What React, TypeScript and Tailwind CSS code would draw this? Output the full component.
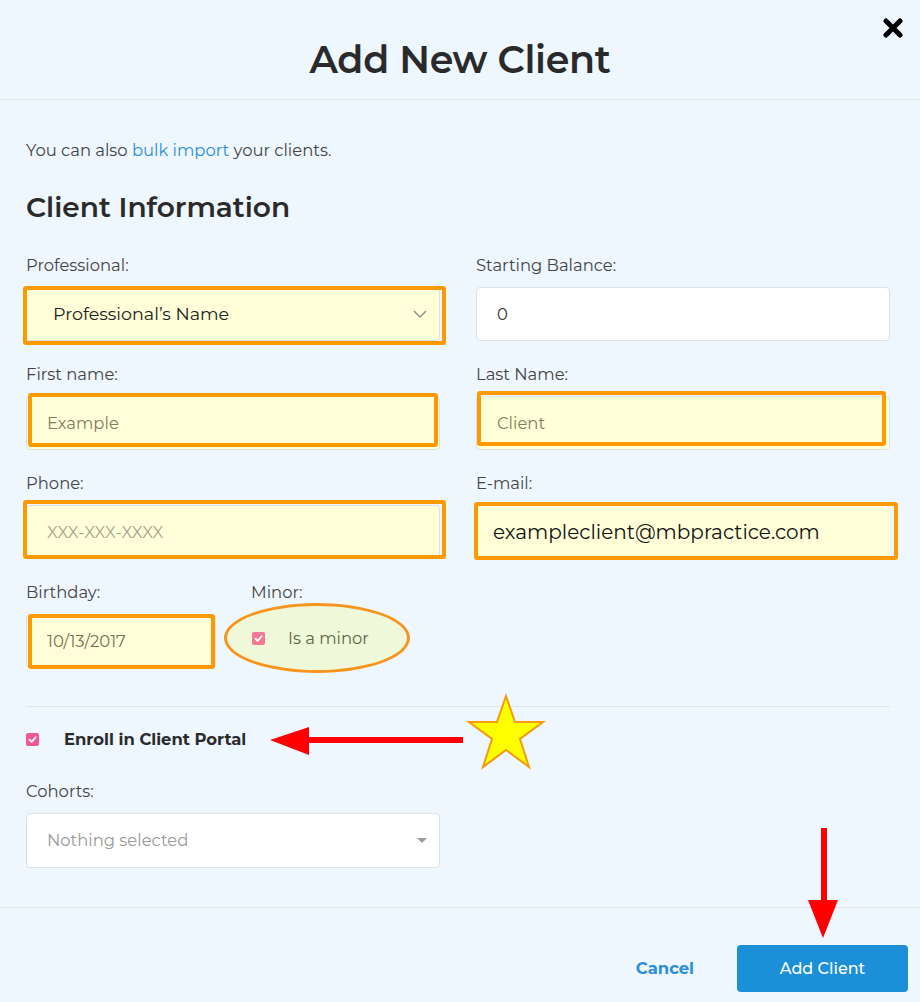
import React from "react";

const font = { fontFamily: "Montserrat, 'DejaVu Sans', sans-serif" };

function Label({ children }: { children: React.ReactNode }) {
    return <div className="text-[16.4px] leading-5 text-[#444] mb-3">{children}</div>;
}

function Box({ className = "", hl = "", children }: { className?: string; hl?: string; children?: React.ReactNode }) {
    return (
        <div className={`relative h-[54px] rounded border border-[#dde1e5] flex items-center ${className}`}>
            {children}
            {hl && <span className={`absolute border-4 border-[#ff9900] rounded-[3px] pointer-events-none ${hl}`} />}
        </div>
    );
}

function Check({ light = false }: { light?: boolean }) {
    return (
        <span className={`w-[13px] h-[13px] rounded-[2px] flex items-center justify-center ${light ? "bg-[#f27a95]" : "bg-[#f0569a]"}`}>
            <svg width="9" height="9" viewBox="0 0 10 10" fill="none">
                <path d="M1.5 5.2 L4 7.6 L8.6 2.4" stroke="white" strokeWidth="1.8" strokeLinecap="round" strokeLinejoin="round" />
            </svg>
        </span>
    );
}

export default function App() {
    return (
        <div className="relative w-[920px] h-[1002px] bg-[#eef6fe] text-[#333] overflow-hidden" style={font}>
            {/* Header */}
            <div className="relative h-[100px] pt-5 flex items-center justify-center border-b border-[#dfe6ee]">
                <h1 className="text-[38px] font-semibold text-[#2a2a2a] tracking-[-0.3px]">Add New Client</h1>
                <svg className="absolute top-[18px] right-[17px]" width="20" height="20" viewBox="0 0 20 20">
                    <path d="M3 3 L17 17 M17 3 L3 17" stroke="#000" strokeWidth="5" strokeLinecap="round" />
                </svg>
            </div>

            {/* Body */}
            <div className="pl-[26px] pr-[30px] pt-[39px]">
                <p className="text-[16.4px] leading-[22px] text-[#444]">
                    You can also <span className="text-[#2a8fd8]">bulk import</span> your clients.
                </p>
                <h2 className="mt-[29px] text-[28px] leading-[34px] font-semibold text-[#2a2a2a]">Client Information</h2>

                <div className="mt-[31px] grid grid-cols-2 gap-x-9 gap-y-[23px]">
                    <div>
                        <Label>Professional:</Label>
                        <Box className="bg-[#ffffd8] pl-[26px] pr-3 justify-between" hl="-left-[4px] -right-[7px] -top-[2px] -bottom-[5px]">
                            <span className="text-[17.5px] text-[#222]">Professional’s Name</span>
                            <svg width="14" height="8" viewBox="0 0 14 8" fill="none">
                                <path d="M1 1 L7 7 L13 1" stroke="#888" strokeWidth="1.3" />
                            </svg>
                        </Box>
                    </div>
                    <div>
                        <Label>Starting Balance:</Label>
                        <Box className="bg-white pl-5">
                            <span className="text-[16.4px] text-[#333]">0</span>
                        </Box>
                    </div>

                    <div>
                        <Label>First name:</Label>
                        <Box className="bg-[#ffffd8] pl-5" hl="left-[1px] right-[1px] -top-[4px] bottom-[2px]">
                            <span className="text-[16.4px] text-[#7a7f5e]">Example</span>
                        </Box>
                    </div>
                    <div>
                        <Label>Last Name:</Label>
                        <Box className="bg-[#ffffd8] pl-5" hl="left-0 right-[3px] -top-[6px] bottom-[3px]">
                            <span className="text-[16.4px] text-[#7a7f5e]">Client</span>
                        </Box>
                    </div>

                    <div>
                        <Label>Phone:</Label>
                        <Box className="bg-[#ffffd8] pl-5" hl="-left-[4px] -right-[7px] -top-[6px] -bottom-[1px]">
                            <span className="text-[16.4px] text-[#a3a68a]">XXX-XXX-XXXX</span>
                        </Box>
                    </div>
                    <div>
                        <Label>E-mail:</Label>
                        <Box className="bg-[#ffffd8] pl-4 border-[#ffffd8]" hl="-left-[3px] -right-[9px] -top-[4px] -bottom-[2px]">
                            <span className="text-[20px] text-[#111]">exampleclient@mbpractice.com</span>
                        </Box>
                    </div>

                    <div className="flex gap-[35px]">
                        <div className="w-[190px]">
                            <Label>Birthday:</Label>
                            <Box className="bg-[#ffffd8] pl-5" hl="left-[1px] right-0 -top-[1px] -bottom-[2px]">
                                <span className="text-[16.4px] text-[#6f7355]">10/13/2017</span>
                            </Box>
                        </div>
                        <div>
                            <Label>Minor:</Label>
                            <div className="-ml-[27px] -mt-[11px] w-[186px] h-[70px] rounded-[50%] border-[3px] border-[#f7941d] bg-[#eff8d8] flex items-center pl-[25px] gap-[23px]">
                                <Check light />
                                <span className="text-[16.4px] text-[#5f6347]">Is a minor</span>
                            </div>
                        </div>
                    </div>
                </div>

                <div className="mt-[33px] border-t border-[#dfe6ee]" />

                <div className="mt-5 h-6 flex items-center gap-[25px]">
                    <Check />
                    <span className="text-[16.4px] font-bold text-[#2a2a2a]">Enroll in Client Portal</span>
                </div>

                <div className="mt-[30px] w-[414px]">
                    <Label>Cohorts:</Label>
                    <Box className="bg-white pl-5 pr-3 justify-between h-[55px]">
                        <span className="text-[16.4px] text-[#999]">Nothing selected</span>
                        <svg width="10" height="6" viewBox="0 0 10 6">
                            <path d="M0 0 L10 0 L5 5 Z" fill="#999" />
                        </svg>
                    </Box>
                </div>
            </div>

            {/* Footer */}
            <div className="absolute left-0 right-0 top-[907px] border-t border-[#dfe6ee] pt-[37px] pr-3 flex justify-end items-center gap-[43px]">
                <span className="text-[16.4px] font-bold text-[#2a8fd8]">Cancel</span>
                <button className="w-[171px] h-[47px] rounded bg-[#1b90d8] text-white text-[16px] font-medium">Add Client</button>
            </div>

            {/* Annotations */}
            <svg className="absolute inset-0 pointer-events-none" width="920" height="1002">
                <rect x="288" y="737" width="175" height="6" fill="#ff0000" />
                <polygon points="270,740 309,727 309,755" fill="#ff0000" />
                <polygon
                    points="506,696 515,722 543,722 520,739 529,767 506,750 483,767 492,739 469,722 497,722"
                    fill="#ffff00"
                    stroke="#f59a0c"
                    strokeWidth="2"
                    strokeLinejoin="miter"
                />
                <rect x="821" y="828" width="6" height="74" fill="#ff0000" />
                <polygon points="808,900 838,900 823,938" fill="#ff0000" />
            </svg>
        </div>
    );
}
